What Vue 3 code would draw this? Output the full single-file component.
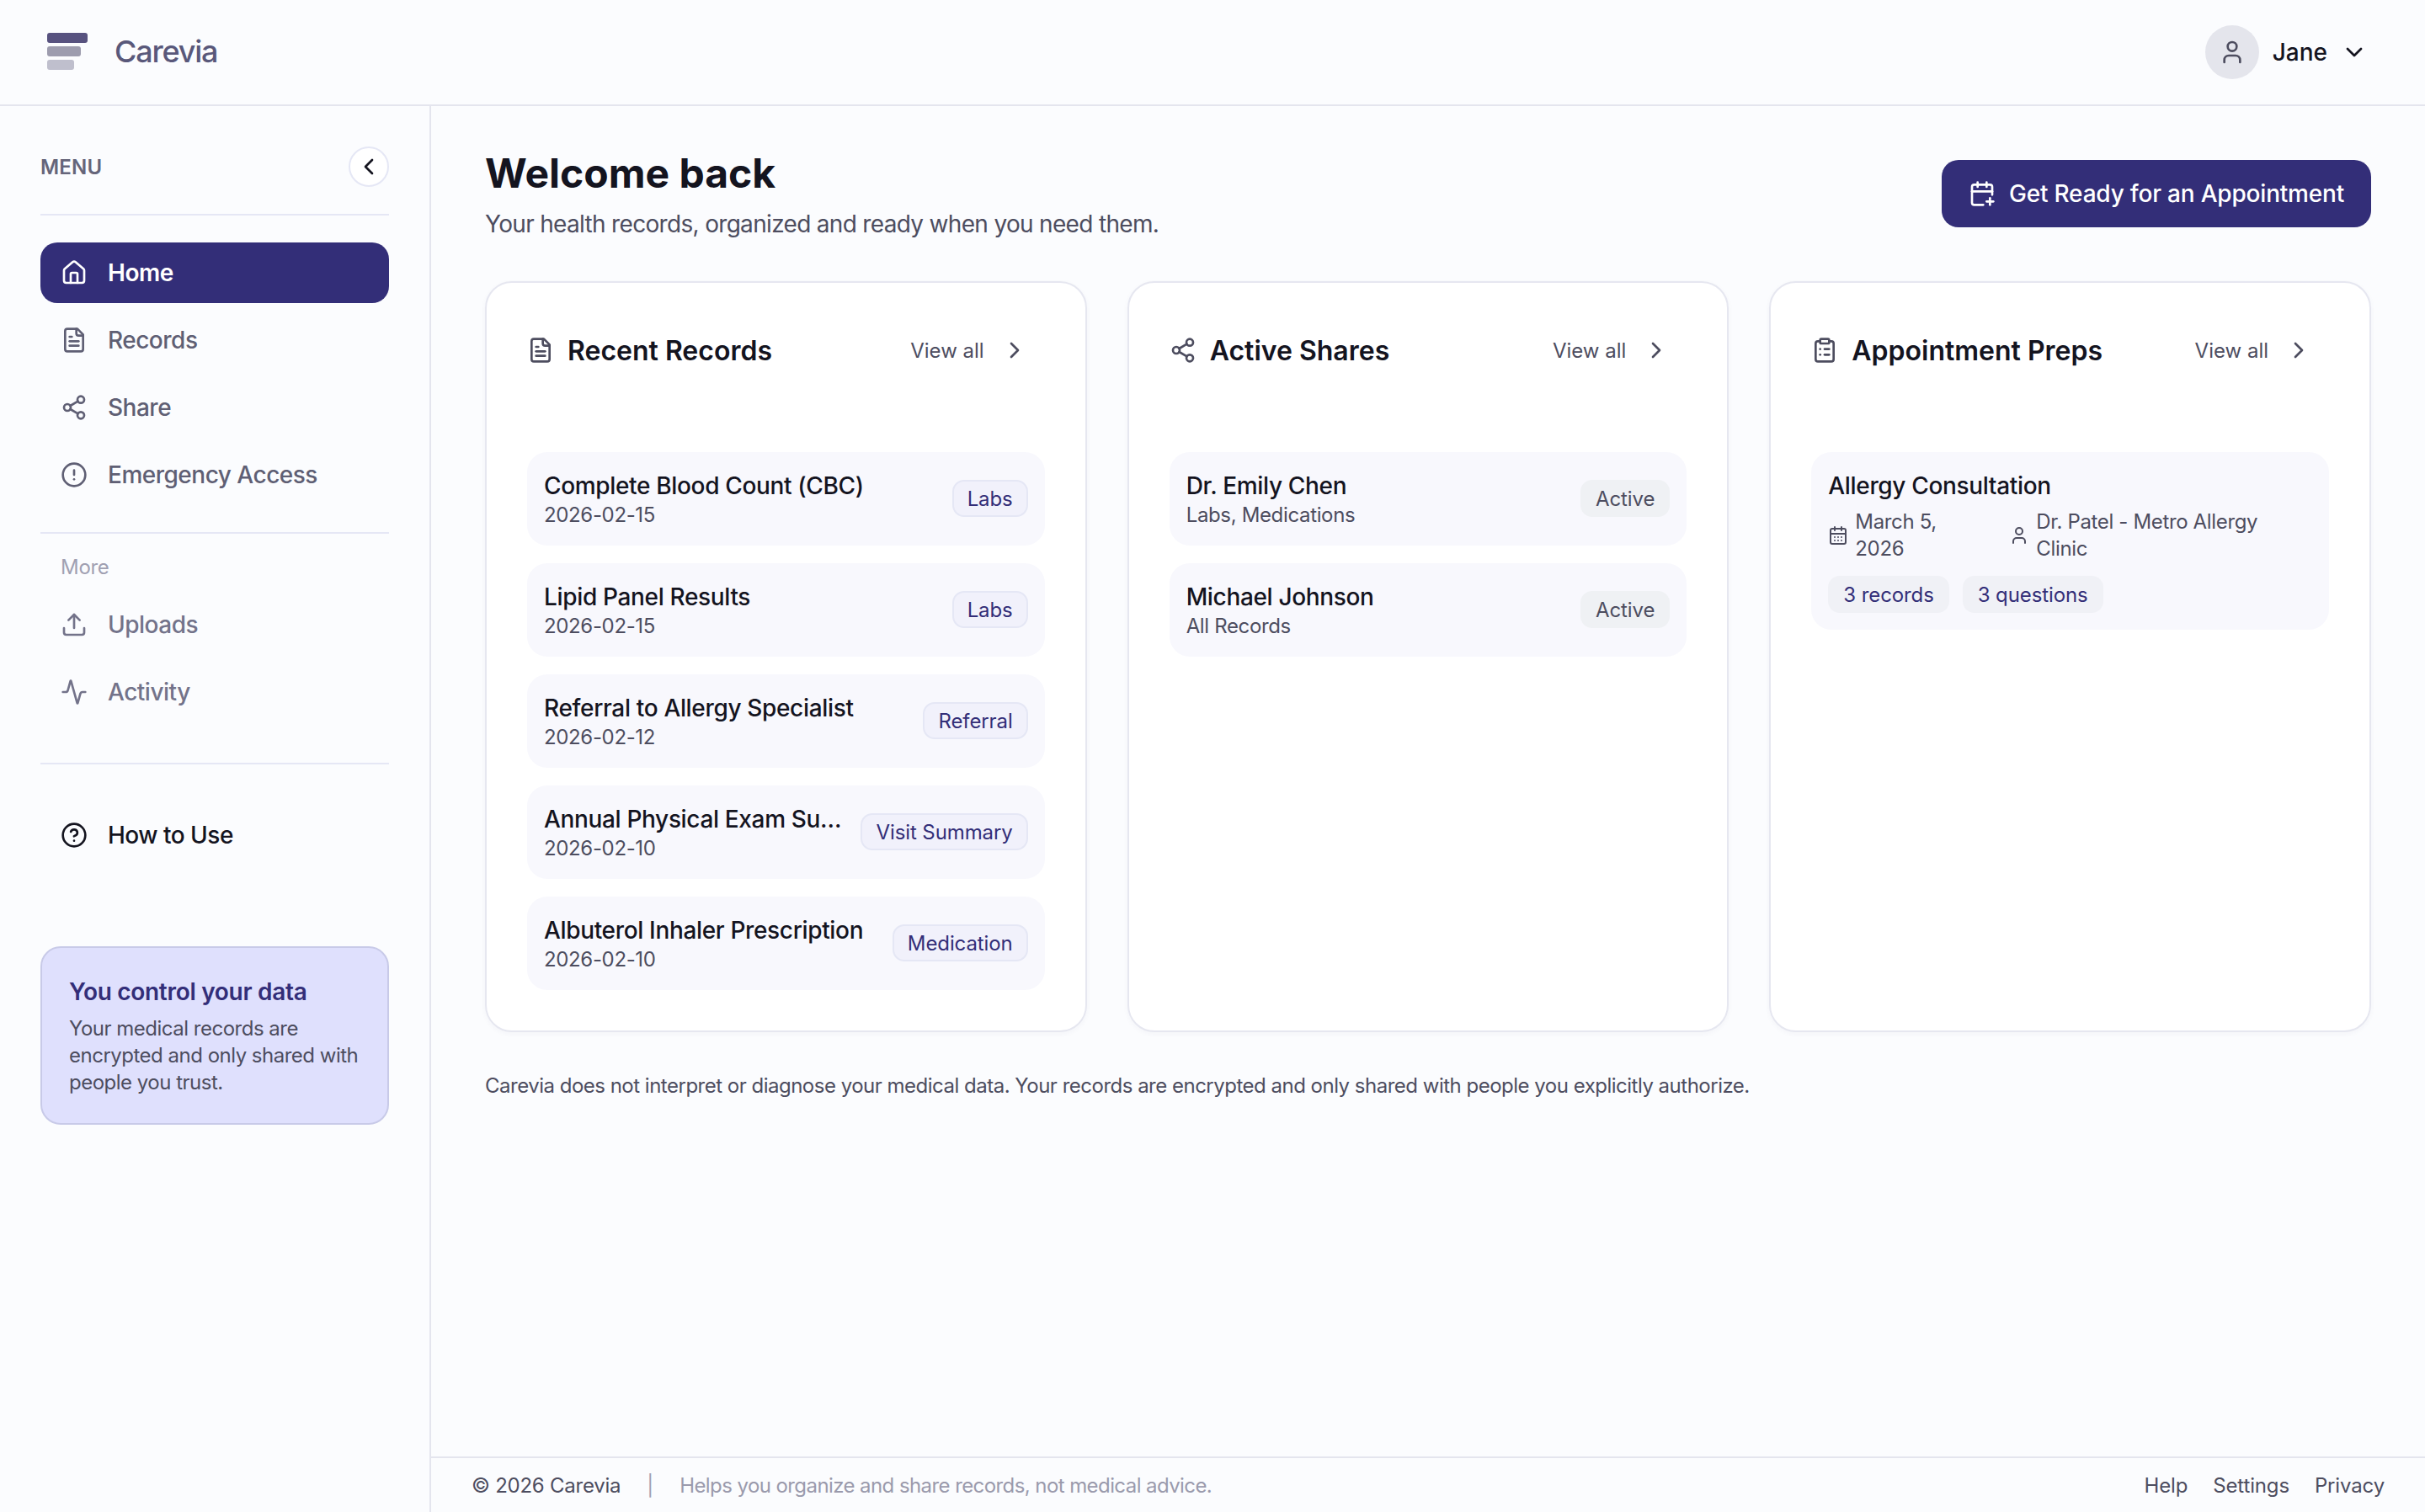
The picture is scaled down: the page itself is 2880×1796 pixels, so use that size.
<template>
  <div class="app">
    <header class="topbar">
      <div class="brand">
        <div class="logo">
          <span class="bar bar-1"></span>
          <span class="bar bar-2"></span>
          <span class="bar bar-3"></span>
        </div>
        <span class="brand-name">Carevia</span>
      </div>
      <div class="user">
        <div class="avatar"><svg class="icon i32" viewBox="0 0 24 24" v-html="icons.user"></svg></div>
        <span class="user-name">Jane</span>
        <svg class="icon i32" viewBox="0 0 24 24" v-html="icons.chevronDown"></svg>
      </div>
    </header>

    <div class="body">
      <aside class="sidebar">
        <div class="menu-head">
          <span class="menu-label">MENU</span>
          <button class="collapse">
            <svg class="icon i32" viewBox="0 0 24 24" v-html="icons.chevronLeft"></svg>
          </button>
        </div>
        <nav class="nav">
          <a v-for="item in mainNav" :key="item.label" class="nav-item" :class="{ active: item.active }">
            <svg class="icon i32" viewBox="0 0 24 24" v-html="icons[item.icon]"></svg>
            <span>{{ item.label }}</span>
          </a>
        </nav>
        <div class="side-divider first"></div>
        <div class="more-label">More</div>
        <nav class="nav">
          <a v-for="item in moreNav" :key="item.label" class="nav-item soft">
            <svg class="icon i32" viewBox="0 0 24 24" v-html="icons[item.icon]"></svg>
            <span>{{ item.label }}</span>
          </a>
        </nav>
        <div class="side-divider second"></div>
        <a class="nav-item dark">
          <svg class="icon i32" viewBox="0 0 24 24" v-html="icons.help"></svg>
          <span>How to Use</span>
        </a>
        <div class="trust">
          <h3>You control your data</h3>
          <p>Your medical records are encrypted and only shared with people you trust.</p>
        </div>
      </aside>

      <div class="content">
        <main class="main">
          <div class="page-head">
            <div>
              <h1>Welcome back</h1>
              <p class="sub">Your health records, organized and ready when you need them.</p>
            </div>
            <button class="primary">
              <svg class="icon i32" viewBox="0 0 24 24" v-html="icons.calendarPlus"></svg>
              Get Ready for an Appointment
            </button>
          </div>

          <div class="cards">
            <section class="card">
              <div class="card-head">
                <svg class="icon i32 head-icon" viewBox="0 0 24 24" v-html="icons.file"></svg>
                <h2>Recent Records</h2>
                <a class="view-all">View all <svg class="icon i32" viewBox="0 0 24 24" v-html="icons.chevronRight"></svg></a>
              </div>
              <div class="list">
                <div v-for="r in records" :key="r.title" class="row">
                  <div class="row-text">
                    <div class="row-title">{{ r.title }}</div>
                    <div class="row-sub">{{ r.date }}</div>
                  </div>
                  <span class="badge">{{ r.type }}</span>
                </div>
              </div>
            </section>

            <section class="card">
              <div class="card-head">
                <svg class="icon i32 head-icon" viewBox="0 0 24 24" v-html="icons.share"></svg>
                <h2>Active Shares</h2>
                <a class="view-all">View all <svg class="icon i32" viewBox="0 0 24 24" v-html="icons.chevronRight"></svg></a>
              </div>
              <div class="list">
                <div v-for="s in shares" :key="s.name" class="row">
                  <div class="row-text">
                    <div class="row-title">{{ s.name }}</div>
                    <div class="row-sub">{{ s.scope }}</div>
                  </div>
                  <span class="badge status">Active</span>
                </div>
              </div>
            </section>

            <section class="card">
              <div class="card-head">
                <svg class="icon i32 head-icon" viewBox="0 0 24 24" v-html="icons.clipboard"></svg>
                <h2>Appointment Preps</h2>
                <a class="view-all">View all <svg class="icon i32" viewBox="0 0 24 24" v-html="icons.chevronRight"></svg></a>
              </div>
              <div class="list">
                <div class="row prep">
                  <div class="row-title">Allergy Consultation</div>
                  <div class="meta">
                    <div class="meta-item date">
                      <svg class="icon i24" viewBox="0 0 24 24" v-html="icons.calendar"></svg>
                      <span>March 5, 2026</span>
                    </div>
                    <div class="meta-item">
                      <svg class="icon i24" viewBox="0 0 24 24" v-html="icons.user"></svg>
                      <span>Dr. Patel - Metro Allergy Clinic</span>
                    </div>
                  </div>
                  <div class="chips">
                    <span class="chip">3 records</span>
                    <span class="chip">3 questions</span>
                  </div>
                </div>
              </div>
            </section>
          </div>

          <p class="note">Carevia does not interpret or diagnose your medical data. Your records are encrypted and only shared with people you explicitly authorize.</p>
        </main>

        <footer class="footer">
          <div class="foot-left">
            <span class="copy">© 2026 Carevia</span>
            <span class="sep">|</span>
            <span class="tag">Helps you organize and share records, not medical advice.</span>
          </div>
          <div class="foot-links">
            <a>Help</a>
            <a>Settings</a>
            <a>Privacy</a>
          </div>
        </footer>
      </div>
    </div>
  </div>
</template>

<script setup>
const icons = {
  home: '<path d="M15 21v-8a1 1 0 0 0-1-1h-4a1 1 0 0 0-1 1v8"/><path d="M3 10a2 2 0 0 1 .709-1.528l7-5.999a2 2 0 0 1 2.582 0l7 5.999A2 2 0 0 1 21 10v9a2 2 0 0 1-2 2H5a2 2 0 0 1-2-2z"/>',
  file: '<path d="M15 2H6a2 2 0 0 0-2 2v16a2 2 0 0 0 2 2h12a2 2 0 0 0 2-2V7Z"/><path d="M14 2v4a2 2 0 0 0 2 2h4"/><path d="M10 9H8"/><path d="M16 13H8"/><path d="M16 17H8"/>',
  share: '<circle cx="18" cy="5" r="3"/><circle cx="6" cy="12" r="3"/><circle cx="18" cy="19" r="3"/><line x1="8.59" x2="15.42" y1="13.51" y2="17.49"/><line x1="15.41" x2="8.59" y1="6.51" y2="10.49"/>',
  alert: '<circle cx="12" cy="12" r="10"/><line x1="12" x2="12" y1="8" y2="12"/><line x1="12" x2="12.01" y1="16" y2="16"/>',
  upload: '<path d="M21 15v4a2 2 0 0 1-2 2H5a2 2 0 0 1-2-2v-4"/><polyline points="17 8 12 3 7 8"/><line x1="12" x2="12" y1="3" y2="15"/>',
  activity: '<path d="M22 12h-2.48a2 2 0 0 0-1.93 1.46l-2.35 8.36a.25.25 0 0 1-.48 0L9.24 2.18a.25.25 0 0 0-.48 0l-2.35 8.36A2 2 0 0 1 4.49 12H2"/>',
  help: '<circle cx="12" cy="12" r="10"/><path d="M9.09 9a3 3 0 0 1 5.83 1c0 2-3 3-3 3"/><path d="M12 17h.01"/>',
  clipboard: '<rect width="8" height="4" x="8" y="2" rx="1" ry="1"/><path d="M16 4h2a2 2 0 0 1 2 2v14a2 2 0 0 1-2 2H6a2 2 0 0 1-2-2V6a2 2 0 0 1 2-2h2"/><path d="M12 11h4"/><path d="M12 16h4"/><path d="M8 11h.01"/><path d="M8 16h.01"/>',
  calendar: '<path d="M8 2v4"/><path d="M16 2v4"/><rect width="18" height="18" x="3" y="4" rx="2"/><path d="M3 10h18"/><path d="M8 14h.01"/><path d="M12 14h.01"/><path d="M16 14h.01"/><path d="M8 18h.01"/><path d="M12 18h.01"/><path d="M16 18h.01"/>',
  calendarPlus: '<path d="M8 2v4"/><path d="M16 2v4"/><path d="M21 13V6a2 2 0 0 0-2-2H5a2 2 0 0 0-2 2v14a2 2 0 0 0 2 2h8"/><path d="M3 10h18"/><path d="M16 19h6"/><path d="M19 16v6"/>',
  user: '<path d="M19 21v-2a4 4 0 0 0-4-4H9a4 4 0 0 0-4 4v2"/><circle cx="12" cy="7" r="4"/>',
  chevronDown: '<path d="m6 9 6 6 6-6"/>',
  chevronLeft: '<path d="m15 18-6-6 6-6"/>',
  chevronRight: '<path d="m9 18 6-6-6-6"/>'
}

const mainNav = [
  { label: 'Home', icon: 'home', active: true },
  { label: 'Records', icon: 'file' },
  { label: 'Share', icon: 'share' },
  { label: 'Emergency Access', icon: 'alert' }
]

const moreNav = [
  { label: 'Uploads', icon: 'upload' },
  { label: 'Activity', icon: 'activity' }
]

const records = [
  { title: 'Complete Blood Count (CBC)', date: '2026-02-15', type: 'Labs' },
  { title: 'Lipid Panel Results', date: '2026-02-15', type: 'Labs' },
  { title: 'Referral to Allergy Specialist', date: '2026-02-12', type: 'Referral' },
  { title: 'Annual Physical Exam Summary', date: '2026-02-10', type: 'Visit Summary' },
  { title: 'Albuterol Inhaler Prescription', date: '2026-02-10', type: 'Medication' }
]

const shares = [
  { name: 'Dr. Emily Chen', scope: 'Labs, Medications' },
  { name: 'Michael Johnson', scope: 'All Records' }
]
</script>

<style>
body {
  margin: 0;
  background: #fbfcfe;
}
</style>

<style scoped>
.app {
  height: 100vh;
  display: flex;
  flex-direction: column;
  font-family: Inter, "Liberation Sans", sans-serif;
  color: #14141f;
  background: #fbfcfe;
  overflow: hidden;
}
.icon {
  fill: none;
  stroke: currentColor;
  stroke-width: 2;
  stroke-linecap: round;
  stroke-linejoin: round;
  flex-shrink: 0;
}
.i24 { width: 24px; height: 24px; }
.i32 { width: 32px; height: 32px; }

/* top bar */
.topbar {
  height: 126px;
  box-sizing: border-box;
  border-bottom: 2px solid #e4e5ee;
  display: flex;
  align-items: center;
  justify-content: space-between;
  padding: 0 68px 0 56px;
  flex-shrink: 0;
}
.brand {
  display: flex;
  align-items: center;
  gap: 32px;
}
.logo {
  display: flex;
  flex-direction: column;
  gap: 4px;
  margin-top: -2px;
}
.bar {
  display: block;
  height: 12px;
  border-radius: 3px;
}
.bar-1 { width: 48px; background: #57527f; }
.bar-2 { width: 40px; background: #9d9cae; }
.bar-3 { width: 32px; background: #bfbfcd; }
.brand-name {
  font-size: 36px;
  font-weight: 500;
  letter-spacing: -1.2px;
  color: #59587a;
  margin-top: -3px;
}
.user {
  display: flex;
  align-items: center;
  gap: 16px;
}
.avatar {
  width: 64px;
  height: 64px;
  border-radius: 50%;
  background: #e4e5ec;
  color: #4d4d5f;
  display: flex;
  align-items: center;
  justify-content: center;
}
.user-name {
  font-size: 28px;
  font-weight: 500;
}

.body {
  flex: 1;
  display: flex;
  min-height: 0;
}

/* sidebar */
.sidebar {
  width: 512px;
  box-sizing: border-box;
  border-right: 2px solid #e4e5ee;
  padding: 48px 48px 0;
  flex-shrink: 0;
}
.menu-head {
  display: flex;
  align-items: center;
  justify-content: space-between;
  padding-bottom: 32px;
  border-bottom: 2px solid #e5e7f5;
  margin-bottom: 32px;
}
.menu-label {
  font-size: 24px;
  font-weight: 600;
  letter-spacing: 0.2px;
  color: #65657a;
}
.collapse {
  width: 48px;
  height: 48px;
  box-sizing: border-box;
  border-radius: 50%;
  border: 2px solid #e5e7f5;
  background: #fff;
  color: #14141f;
  padding: 0;
  display: flex;
  align-items: center;
  justify-content: center;
}
.nav {
  display: flex;
  flex-direction: column;
  gap: 8px;
}
.nav-item {
  height: 72px;
  box-sizing: border-box;
  padding-left: 24px;
  display: flex;
  align-items: center;
  gap: 24px;
  border-radius: 20px;
  font-size: 28px;
  font-weight: 500;
  letter-spacing: -0.5px;
  color: #5f5f74;
}
.nav-item.active {
  background: #332e78;
  color: #fff;
  font-weight: 600;
}
.nav-item.soft {
  color: #73738a;
}
.nav-item.dark {
  color: #14141f;
  margin-top: 48px;
}
.side-divider {
  height: 2px;
  background: #e5e7f5;
}
.side-divider.first {
  margin-top: 32px;
}
.side-divider.second {
  margin-top: 48px;
}
.more-label {
  font-size: 24px;
  line-height: 32px;
  letter-spacing: -0.3px;
  color: #a0a0b2;
  padding: 24px 24px 16px;
}
.trust {
  margin-top: 96px;
  border: 2px solid #c8cae8;
  border-radius: 24px;
  background: #dfe0fd;
  padding: 32px;
  box-sizing: border-box;
}
.trust h3 {
  margin: 0;
  font-size: 28px;
  line-height: 40px;
  font-weight: 600;
  letter-spacing: -0.3px;
  color: #332e78;
}
.trust p {
  margin: 8px 0 0;
  font-size: 24px;
  line-height: 32px;
  letter-spacing: -0.5px;
  color: #4d4d5f;
}

/* main */
.content {
  flex: 1;
  min-width: 0;
  display: flex;
  flex-direction: column;
}
.main {
  flex: 1;
  padding: 64px 64px 0;
}
.page-head {
  display: flex;
  justify-content: space-between;
  align-items: flex-start;
  margin-bottom: 48px;
}
h1 {
  margin: 0;
  font-size: 48px;
  line-height: 32px;
  font-weight: 700;
}
.sub {
  margin: 24px 0 0;
  font-size: 28px;
  line-height: 40px;
  letter-spacing: -0.68px;
  color: #4d4d5f;
}
.primary {
  height: 80px;
  padding: 0 32px;
  border: none;
  border-radius: 20px;
  background: #332e78;
  color: #fff;
  font-family: inherit;
  font-size: 28px;
  font-weight: 500;
  letter-spacing: -0.2px;
  display: flex;
  align-items: center;
  gap: 16px;
}
.cards {
  display: grid;
  grid-template-columns: repeat(3, 1fr);
  gap: 48px;
}
.card {
  background: #fff;
  border: 2px solid #e6e7f0;
  border-radius: 32px;
  padding: 48px;
  box-shadow: 0 2px 6px rgba(40, 40, 90, 0.04);
  min-width: 0;
}
.card-head {
  height: 64px;
  display: flex;
  align-items: center;
  gap: 16px;
}
.head-icon {
  color: #4d4d5f;
}
h2 {
  margin: 0;
  font-size: 32px;
  font-weight: 600;
  flex: 1;
}
.view-all {
  font-size: 24px;
  color: #4d4d5f;
  display: flex;
  align-items: center;
  gap: 20px;
  padding-right: 20px;
}
.list {
  margin-top: 89px;
  display: flex;
  flex-direction: column;
  gap: 21px;
}
.row {
  background: #f8f8fd;
  border-radius: 24px;
  padding: 21px 20px 20px;
  display: flex;
  align-items: center;
  gap: 16px;
}
.row-text {
  flex: 1;
  min-width: 0;
}
.row-title {
  font-size: 28px;
  line-height: 38px;
  font-weight: 500;
  letter-spacing: -0.34px;
  white-space: nowrap;
  overflow: hidden;
  text-overflow: ellipsis;
}
.row-sub {
  font-size: 24px;
  line-height: 32px;
  letter-spacing: -0.35px;
  color: #4d4d5f;
}
.badge {
  height: 44px;
  box-sizing: border-box;
  flex-shrink: 0;
  display: flex;
  align-items: center;
  padding: 0 16px;
  margin-top: -2px;
  border: 2px solid #e5e7f5;
  border-radius: 14px;
  background: #f1f1fb;
  font-size: 24px;
  letter-spacing: -0.1px;
  color: #332e78;
}
.badge.status {
  border-color: #eff1f4;
  background: #eff1f4;
  color: #4d4d5f;
}
.prep {
  display: block;
}
.meta {
  display: flex;
  gap: 22px;
  margin-top: 8px;
  font-size: 24px;
  line-height: 32px;
  letter-spacing: -0.35px;
  color: #4d4d5f;
}
.meta-item {
  display: flex;
  align-items: center;
  gap: 8px;
}
.meta-item.date {
  flex: 0 0 193px;
}
.meta-item.date span {
  width: 120px;
}
.chips {
  display: flex;
  gap: 16px;
  margin-top: 16px;
}
.chip {
  height: 44px;
  display: flex;
  align-items: center;
  padding: 0 18px;
  border-radius: 14px;
  background: #f0f1f6;
  font-size: 24px;
  letter-spacing: -0.1px;
  color: #332e78;
}
.note {
  margin: 48px 0 0;
  font-size: 24px;
  line-height: 32px;
  letter-spacing: -0.5px;
  color: #4d4d5f;
}

/* footer */
.footer {
  height: 66px;
  box-sizing: border-box;
  flex-shrink: 0;
  border-top: 2px solid #e4e5ee;
  display: flex;
  align-items: center;
  justify-content: space-between;
  padding: 0 48px;
  font-size: 24px;
}
.foot-left {
  display: flex;
  align-items: center;
}
.copy {
  letter-spacing: -0.25px;
  color: #4d4d5f;
}
.sep {
  margin: 0 31px;
  color: #a0a0b2;
}
.tag {
  letter-spacing: -0.58px;
  color: #9a9aac;
}
.foot-links {
  display: flex;
  gap: 30px;
  letter-spacing: -0.15px;
  color: #4d4d5f;
}
</style>
